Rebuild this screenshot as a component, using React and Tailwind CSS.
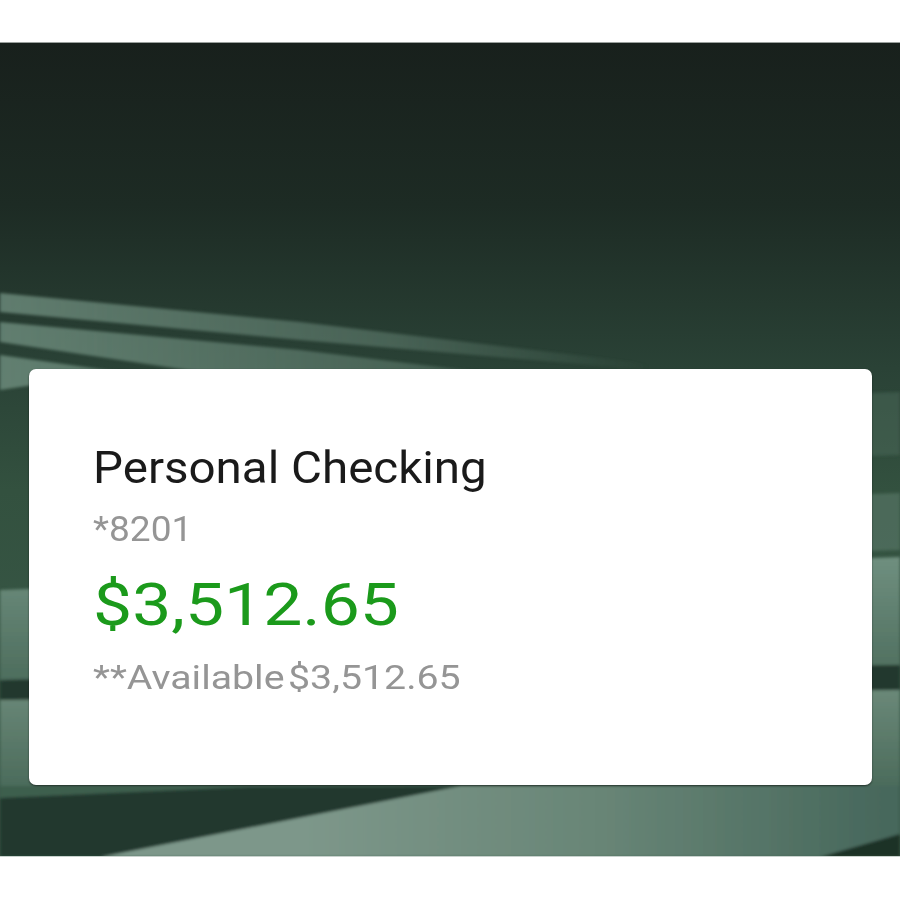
import React from "react";

function Wallpaper() {
  return (
    <svg
      className="absolute inset-0 w-full h-full"
      viewBox="0 42 900 815"
      preserveAspectRatio="none"
    >
      <defs>
        <linearGradient id="bg" x1="0" y1="42" x2="0" y2="857" gradientUnits="userSpaceOnUse">
          <stop offset="0" stopColor="#18201c" />
          <stop offset="0.2" stopColor="#1d2b24" />
          <stop offset="0.4" stopColor="#2a4236" />
          <stop offset="0.55" stopColor="#33513f" />
          <stop offset="1" stopColor="#3b5c4c" />
        </linearGradient>
        <linearGradient id="fadeR" x1="0" y1="0" x2="650" y2="0" gradientUnits="userSpaceOnUse">
          <stop offset="0" stopColor="#7a9a8a" stopOpacity="0.7" />
          <stop offset="0.6" stopColor="#7a9a8a" stopOpacity="0.4" />
          <stop offset="1" stopColor="#7a9a8a" stopOpacity="0" />
        </linearGradient>
        <linearGradient id="lightBand" x1="0" y1="560" x2="0" y2="680" gradientUnits="userSpaceOnUse">
          <stop offset="0" stopColor="#6e8e7e" />
          <stop offset="1" stopColor="#4d6d5d" />
        </linearGradient>
        <linearGradient id="lightBand2" x1="0" y1="690" x2="0" y2="790" gradientUnits="userSpaceOnUse">
          <stop offset="0" stopColor="#6a8878" />
          <stop offset="1" stopColor="#4a6a5a" />
        </linearGradient>
        <linearGradient id="bottomLight" x1="300" y1="0" x2="900" y2="0" gradientUnits="userSpaceOnUse">
          <stop offset="0" stopColor="#7d978a" />
          <stop offset="0.5" stopColor="#688576" />
          <stop offset="1" stopColor="#45665a" />
        </linearGradient>
        <filter id="soft" x="-5%" y="-20%" width="110%" height="140%">
          <feGaussianBlur stdDeviation="1.8" />
        </filter>
      </defs>
      <rect x="0" y="42" width="900" height="815" fill="url(#bg)" />
      <g filter="url(#soft)">
        <polygon points="0,293 300,322 650,364 650,370 300,340 0,312" fill="url(#fadeR)" />
        <polygon points="0,322 300,350 480,372 200,372 0,342" fill="url(#fadeR)" />
        <polygon points="0,355 120,372 0,390" fill="url(#fadeR)" />
        <polygon points="700,398 900,392 900,455 700,462" fill="#4a6a5a" opacity="0.5" />
        <polygon points="700,500 900,493 900,550 700,556" fill="#5a7a6a" opacity="0.6" />
        <polygon points="0,590 900,557 900,665 0,680" fill="url(#lightBand)" />
        <polygon points="0,680 900,665 900,690 0,700" fill="#23382d" />
        <polygon points="0,700 900,690 900,800 0,800" fill="url(#lightBand2)" />
        <polygon points="0,786 900,786 900,857 0,857" fill="#3d5e4e" />
        <polygon points="460,786 900,786 900,836 820,857 100,857" fill="url(#bottomLight)" />
        <polygon points="0,798 250,787 460,786 100,857 0,857" fill="#22382d" />
        <polygon points="820,857 900,834 900,857" fill="#1f3128" />
      </g>
      <line x1="0" y1="42.5" x2="900" y2="42.5" stroke="#9aa09d" strokeWidth="1" />
      <line x1="0" y1="856.5" x2="900" y2="856.5" stroke="#c9d2ce" strokeWidth="1" />
    </svg>
  );
}

export default function App() {
  return (
    <div
      className="w-[900px] h-[900px] bg-white pt-[42px] overflow-hidden"
      style={{ fontFamily: "Roboto, 'Noto Sans', sans-serif" }}
    >
      <div className="relative h-[815px] pt-[327px] pl-[29px] pr-[28px] overflow-hidden">
        <Wallpaper />
        <div className="relative h-[416px] bg-white rounded-[7px] shadow-[0_1px_2px_rgba(0,0,0,0.55)] pl-[64px] pt-[73px] overflow-hidden">
          <div className="text-[44px] leading-[52px] text-[#1a1a1a] origin-left scale-x-[1.08] whitespace-nowrap">
            Personal Checking
          </div>
          <div className="mt-[16px] text-[35px] leading-[40px] text-[#959595] origin-left scale-x-[1.06] whitespace-nowrap">
            *8201
          </div>
          <div className="mt-[22px] text-[59px] leading-[66px] text-[#1b9a1b] origin-left scale-x-[1.18] whitespace-nowrap">
            $3,512.65
          </div>
          <div className="mt-[21px] text-[33px] leading-[38px] text-[#959595] origin-left scale-x-[1.19] whitespace-nowrap">
            **Available<span className="ml-[3px]">$3,512.65</span>
          </div>
        </div>
      </div>
    </div>
  );
}
